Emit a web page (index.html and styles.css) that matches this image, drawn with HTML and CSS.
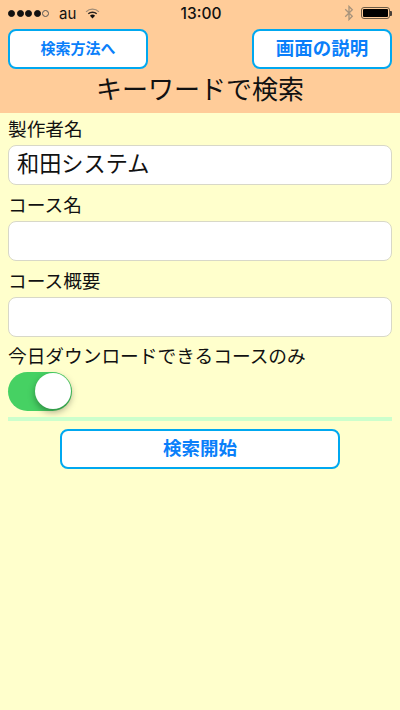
FILE: index.html
```html
<!DOCTYPE html>
<html lang="ja">
<head>
    <meta charset="UTF-8">
    <meta name="viewport" content="width=device-width, initial-scale=1.0">
    <title>キーワードで検索</title>
    <link rel="stylesheet" href="styles.css">
</head>
<body>
    <header class="top">
        <div class="status-bar">
            <div class="status-left">
                <span class="signal">
                    <i class="dot"></i><i class="dot"></i><i class="dot"></i><i class="dot"></i><i class="dot empty"></i>
                </span>
                <span class="carrier">au</span>
                <svg class="wifi" viewBox="0 0 16 12" width="15" height="11">
                    <path d="M1 4.2 A10 10 0 0 1 15 4.2" fill="none" stroke="#a08c76" stroke-width="1.4"/>
                    <path d="M3.4 6.4 A6.8 6.8 0 0 1 12.6 6.4" fill="none" stroke="#2a2420" stroke-width="1.5"/>
                    <path d="M8 11.5 L5.2 8.4 A4 4 0 0 1 10.8 8.4 Z" fill="#111"/>
                </svg>
            </div>
            <div class="clock">13:00</div>
            <div class="status-right">
                <svg class="bluetooth" viewBox="0 0 10 17" width="10" height="16">
                    <path d="M1 4.5 L8.5 12 L5 15.5 V1.5 L8.5 5 L1 12.5" fill="none" stroke="#a8947c" stroke-width="1.4"/>
                </svg>
                <span class="battery"><span class="battery-fill"></span></span>
                <span class="battery-tip"></span>
            </div>
        </div>
        <div class="top-buttons">
            <button class="btn btn-small">検索方法へ</button>
            <button class="btn btn-help">画面の説明</button>
        </div>
        <h1 class="title">キーワードで検索</h1>
    </header>

    <main class="form">
        <label class="field-label">製作者名</label>
        <div class="text-input">和田システム</div>
        <label class="field-label">コース名</label>
        <div class="text-input"></div>
        <label class="field-label">コース概要</label>
        <div class="text-input"></div>
        <label class="field-label today">今日ダウンロードできるコースのみ</label>
        <div class="switch"><div class="knob"></div></div>
        <div class="divider"></div>
        <button class="btn btn-start">検索開始</button>
    </main>
</body>
</html>
```

FILE: styles.css
```css
*{
    box-sizing: border-box;
}
html, body{
    height: 100%;
}
body{
    margin: 0;
    background-color: #ffffcc;
    color: #111;
    font-family: "Liberation Sans", "Noto Sans CJK JP", sans-serif;
    overflow: hidden;
}
.top{
    height: 113px;
    background-color: #ffcc99;
}
.status-bar{
    height: 29px;
    padding: 0 8px 3px;
    display: flex;
    align-items: center;
    justify-content: space-between;
    position: relative;
}
.status-left{
    display: flex;
    align-items: center;
    font-size: 15px;
}
.signal{
    display: flex;
    gap: 1.5px;
}
.dot{
    width: 7px;
    height: 7px;
    border-radius: 50%;
    background-color: #111;
    border: 1px solid #111;
}
.dot.empty{
    background-color: transparent;
    border-color: #555;
}
.carrier{
    margin-left: 10px;
    font-family: Inter, sans-serif;
}
.wifi{
    margin-left: 9px;
}
.clock{
    position: absolute;
    left: 2px;
    right: 0;
    text-align: center;
    font-family: Inter, sans-serif;
    font-size: 15.5px;
    font-weight: 500;
}
.status-right{
    display: flex;
    align-items: center;
}
.bluetooth{
    margin-right: 7px;
}
.battery{
    width: 29px;
    height: 12px;
    border: 1px solid #6b5a45;
    border-radius: 3px;
    padding: 1px;
    display: block;
}
.battery-fill{
    display: block;
    height: 100%;
    background-color: #000;
    border-radius: 1px;
}
.battery-tip{
    width: 2px;
    height: 5px;
    background-color: #4a4038;
    border-radius: 0 1px 1px 0;
}
.top-buttons{
    padding: 0 8px;
    display: flex;
    justify-content: space-between;
}
.btn{
    height: 40px;
    padding: 0 0 4px;
    background-color: #fff;
    border: 2.5px solid #00a8f0;
    border-radius: 8px;
    color: #0a7ffa;
    font-family: inherit;
    font-weight: bold;
}
.btn-small{
    width: 140px;
    font-size: 15px;
}
.btn-help{
    width: 140px;
    font-size: 18.5px;
}
.title{
    margin: 2px 0 0;
    text-align: center;
    font-size: 26px;
    font-weight: normal;
    line-height: 38px;
}
.form{
    padding: 0 8px;
    display: flex;
    flex-direction: column;
}
.field-label{
    height: 32px;
    padding-top: 4px;
    font-size: 18.7px;
    line-height: 26px;
}
.field-label + .text-input{
    margin-bottom: 4px;
}
.text-input{
    height: 40px;
    padding: 0 8px;
    background-color: #fff;
    border: 1px solid #d8d8c8;
    border-radius: 8px;
    font-size: 22.2px;
    line-height: 38px;
}
.today{
    height: 31px;
    padding-top: 3px;
}
.switch{
    width: 64px;
    height: 39px;
    background-color: #46d163;
    border-radius: 20px;
    display: flex;
    justify-content: flex-end;
    align-items: flex-start;
    padding: 1px 1px 0 0;
}
.knob{
    width: 36px;
    height: 36px;
    background-color: #fff;
    border-radius: 50%;
    box-shadow: 0 3px 7px rgba(0, 0, 0, 0.35);
}
.divider{
    height: 4px;
    margin-top: 6px;
    background-color: #ccffcc;
}
.btn-start{
    width: 280px;
    margin: 8px auto 0;
    font-size: 18.5px;
}
```
